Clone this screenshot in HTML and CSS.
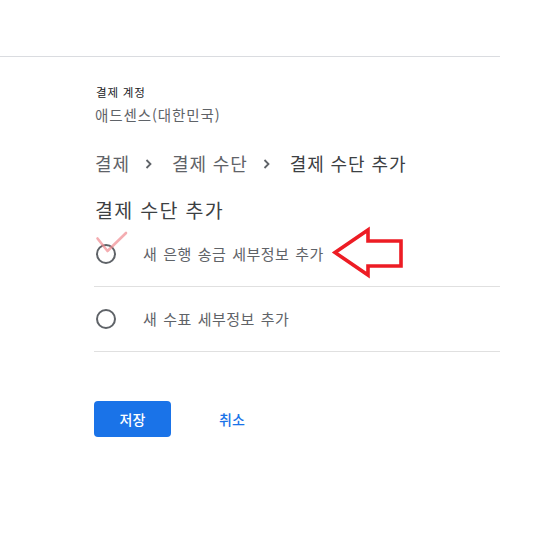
FILE: index.html
```html
<!DOCTYPE html>
<html lang="ko">
<head>
<meta charset="utf-8">
<title>결제 수단 추가</title>
<link rel="stylesheet" href="styles.css">
</head>
<body>
<div class="page">
  <div class="topbar"></div>
  <main class="content">
    <div class="account">
      <div class="account-label">결제 계정</div>
      <div class="account-name">애드센스(대한민국)</div>
    </div>
    <nav class="crumbs">
      <span class="crumb">결제</span>
      <svg class="chev" width="8" height="10" viewBox="0 0 8 10"><path d="M1.5 1 L5.5 5 L1.5 9" fill="none" stroke="#5f6368" stroke-width="1.8"/></svg>
      <span class="crumb">결제 수단</span>
      <svg class="chev" width="8" height="10" viewBox="0 0 8 10"><path d="M1.5 1 L5.5 5 L1.5 9" fill="none" stroke="#5f6368" stroke-width="1.8"/></svg>
      <span class="crumb current">결제 수단 추가</span>
    </nav>
    <h1 class="title">결제 수단 추가</h1>
    <div class="options">
      <label class="option"><span class="radio"></span><span class="option-text">새 은행 송금 세부정보 추가</span></label>
      <label class="option"><span class="radio"></span><span class="option-text">새 수표 세부정보 추가</span></label>
    </div>
    <div class="actions">
      <button class="btn-primary">저장</button>
      <button class="btn-text">취소</button>
    </div>
  </main>
  <svg class="annot" width="547" height="547" viewBox="0 0 547 547">
    <path d="M97.5 238.5 L107.5 251 L126 233" fill="none" stroke="#f08a90" stroke-opacity="0.7" stroke-width="2.6" stroke-linecap="round" stroke-linejoin="round"/>
    <path d="M335 252.5 L368 230 L368 241 L401 241 L401 266 L368 266 L368 275 Z" fill="none" stroke="#ed1c24" stroke-width="3.6" stroke-linejoin="miter"/>
  </svg>
</div>
</body>
</html>
```
FILE: styles.css
```css
* { box-sizing: border-box; }
html, body { margin: 0; padding: 0; background: #fff; }
body {
  font-family: "Noto Sans CJK KR", "Noto Sans", sans-serif;
  color: #202124;
}
.page {
  position: relative;
  width: 547px;
  height: 547px;
}
.topbar {
  width: 500px;
  height: 57px;
  border-bottom: 1px solid #dadce0;
}
.content {
  width: 500px;
  padding-left: 94px;
}
.account { padding-top: 27px; }
.account-label {
  font-size: 11.5px;
  line-height: 16px;
  letter-spacing: 0.8px;
  color: #202124;
  padding-left: 2px;
}
.account-name {
  margin-top: 5px;
  font-size: 14.5px;
  line-height: 20px;
  letter-spacing: 0.9px;
  color: #5f6368;
  padding-left: 1px;
}
.crumbs {
  margin-top: 26px;
  display: flex;
  align-items: center;
  font-size: 18px;
  line-height: 24px;
  letter-spacing: 0.9px;
  color: #5f6368;
  padding-left: 1px;
}
.chev { margin: 1px 19px 0 15px; }
.crumb.current { color: #3c4043; }
.title {
  margin: 23px 0 0;
  font-size: 19.5px;
  font-weight: 400;
  line-height: 24px;
  letter-spacing: 1.3px;
  color: #3c4043;
  padding-left: 1px;
}
.options { width: 406px; }
.option {
  display: flex;
  align-items: center;
  height: 65px;
  border-bottom: 1px solid #e0e0e0;
}
.radio {
  width: 20px;
  height: 20px;
  margin-left: 2px;
  border: 2px solid #5f6368;
  border-radius: 50%;
  flex: none;
}
.option-text {
  margin-left: 27px;
  font-size: 15px;
  line-height: 20px;
  letter-spacing: 0.4px;
  word-spacing: 1.5px;
  color: #5f6368;
}
.actions {
  margin-top: 49px;
  display: flex;
  align-items: center;
}
.btn-primary {
  width: 77px;
  height: 36px;
  border: none;
  border-radius: 4px;
  background: #1a73e8;
  color: #fff;
  font-family: inherit;
  font-size: 14px;
  font-weight: 500;
  padding: 0;
}
.btn-text {
  margin-left: 48px;
  border: none;
  background: none;
  padding: 0;
  color: #1a73e8;
  font-family: inherit;
  font-size: 14px;
  font-weight: 500;
}
.annot {
  position: absolute;
  left: 0;
  top: 0;
  pointer-events: none;
}
```
